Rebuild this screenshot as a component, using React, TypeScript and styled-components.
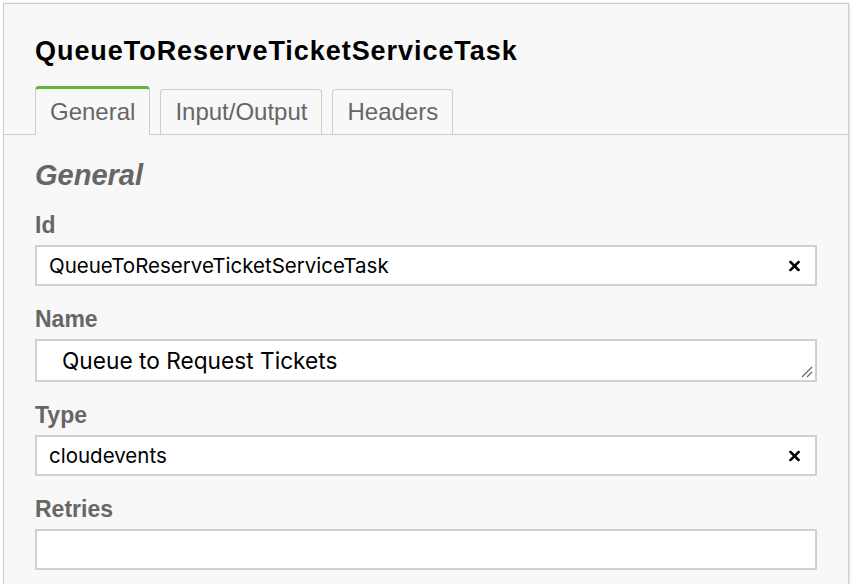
import styled, { createGlobalStyle } from 'styled-components'

const GlobalStyle = createGlobalStyle`
  html, body {
    margin: 0;
    padding: 0;
    background: #fff;
    overflow: hidden;
  }
`

const Panel = styled.div`
  box-sizing: border-box;
  margin: 3px 3px 0 3px;
  height: 581px;
  border: 1px solid #cdcdcd;
  border-bottom: none;
  background: #f8f8f8;
  box-shadow: 1px 0 2px rgba(0, 0, 0, 0.12);
  font-family: 'Liberation Sans', Arial, sans-serif;
`

const Header = styled.div`
  padding: 31px 0 0 0;
  border-bottom: 1px solid #cdcdcd;
`

const Title = styled.h1`
  margin: 0 0 19px 31px;
  font-size: 27px;
  line-height: 32px;
  font-weight: bold;
  color: #000;
  letter-spacing: 0.95px;
`

const Tabs = styled.div`
  display: flex;
  align-items: flex-end;
  gap: 10px;
  padding-left: 31px;
`

const Tab = styled.div<{ $active?: boolean }>`
  box-sizing: border-box;
  height: ${(p) => (p.$active ? '49px' : '45px')};
  margin-bottom: ${(p) => (p.$active ? '-1px' : '0')};
  padding: 0 14px;
  display: flex;
  align-items: center;
  border: 1px solid #cdcdcd;
  border-top: ${(p) => (p.$active ? '3px solid #63b33a' : '1px solid #cdcdcd')};
  border-bottom: ${(p) => (p.$active ? '1px solid #f8f8f8' : 'none')};
  border-radius: 4px 4px 0 0;
  background: #f8f8f8;
  color: #666;
  font-size: 24px;
`

const Content = styled.div`
  padding: 24px 31px 0 31px;
`

const GroupTitle = styled.h2`
  margin: 0 0 20px 0;
  font-size: 29px;
  line-height: 32px;
  font-style: italic;
  font-weight: bold;
  color: #666;
`

const Field = styled.div`
  margin-bottom: 19px;
`

const Label = styled.label`
  display: block;
  margin-bottom: 6px;
  font-size: 23px;
  line-height: 28px;
  font-weight: bold;
  color: #666;
`

const InputBox = styled.div<{ $tall?: boolean }>`
  box-sizing: border-box;
  position: relative;
  display: flex;
  align-items: center;
  height: ${(p) => (p.$tall ? '43px' : '41px')};
  padding: 0 0 0 ${(p) => (p.$tall ? '25px' : '12px')};
  border: 2px solid #d0d0d0;
  background: #fff;
  color: #000;
  font-family: Inter, 'Liberation Sans', sans-serif;
  font-size: ${(p) => (p.$tall ? '22.7px' : '20.5px')};
`

const Clear = styled.span`
  position: absolute;
  right: 15px;
  top: 50%;
  transform: translateY(-50%);
  display: flex;
`

const Grip = styled.svg`
  position: absolute;
  right: 2px;
  bottom: 2px;
`

const ClearIcon = () => (
  <Clear>
    <svg width="11" height="11" viewBox="0 0 11 11">
      <path d="M1.5 1.5 L9.5 9.5 M9.5 1.5 L1.5 9.5" stroke="#000" strokeWidth="2.6" strokeLinecap="square" />
    </svg>
  </Clear>
)

const App = () => {
  return (
    <>
      <GlobalStyle />
      <Panel>
        <Header>
          <Title>QueueToReserveTicketServiceTask</Title>
          <Tabs>
            <Tab $active>General</Tab>
            <Tab>Input/Output</Tab>
            <Tab>Headers</Tab>
          </Tabs>
        </Header>
        <Content>
          <GroupTitle>General</GroupTitle>
          <Field>
            <Label>Id</Label>
            <InputBox>
              QueueToReserveTicketServiceTask
              <ClearIcon />
            </InputBox>
          </Field>
          <Field>
            <Label>Name</Label>
            <InputBox $tall>
              Queue to Request Tickets
              <Grip width="14" height="14" viewBox="0 0 14 14">
                <path d="M13 3 L3 13 M13 8 L8 13" stroke="#666" strokeWidth="1.2" />
              </Grip>
            </InputBox>
          </Field>
          <Field>
            <Label>Type</Label>
            <InputBox>
              cloudevents
              <ClearIcon />
            </InputBox>
          </Field>
          <Field>
            <Label>Retries</Label>
            <InputBox />
          </Field>
        </Content>
      </Panel>
    </>
  )
}

export default App
